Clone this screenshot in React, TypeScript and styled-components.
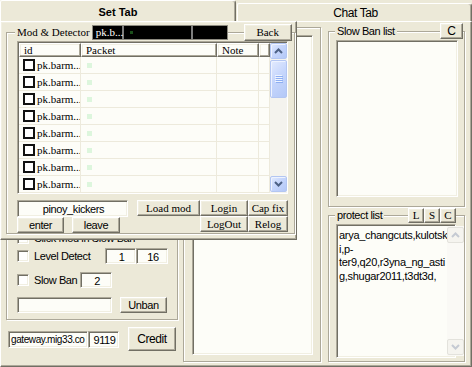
import React from 'react';
import styled, { createGlobalStyle, css } from 'styled-components';

const face = '#ECE9D8';
const light = '#F1EFE2';
const shadow = '#ACA899';
const dark = '#716F64';
const paper = '#FDFDF8';
const grid = '#EDEADC';

const sans = `"Liberation Sans", Arial, sans-serif`;
const serif = `"Liberation Serif", "Times New Roman", serif`;

// the old bitmap "MS Sans Serif" is much narrower than Arial: tighten it up
const narrow = css`
  font-family: ${sans};
  letter-spacing: -0.4px;
`;

const GlobalStyle = createGlobalStyle`
  html, body {
    margin: 0;
    padding: 0;
    background: ${face};
  }
  body {
    font-family: ${sans};
    font-size: 11px;
    color: #000;
  }
  * {
    box-sizing: border-box;
  }
`;

const raised = css`
  border: 1px solid;
  border-color: #fff ${dark} ${dark} #fff;
  box-shadow: inset -1px -1px 0 ${shadow}, inset 1px 1px 0 ${light};
`;

const sunken = css`
  border: 1px solid;
  border-color: ${shadow} #fff #fff ${shadow};
  box-shadow: inset 1px 1px 0 ${dark}, inset -1px -1px 0 ${light};
`;

const etched = css`
  border: 1px solid ${shadow};
  box-shadow: inset 1px 1px 0 #fff, 1px 1px 0 #fff;
`;

const Window = styled.div`
  width: 472px;
  height: 367px;
  overflow: hidden;
  background: ${face};
`;

const TabStrip = styled.div`
  display: flex;
  align-items: flex-end;
  height: 21px;
`;

const Tab = styled.div<{ $active?: boolean }>`
  display: flex;
  align-items: center;
  justify-content: center;
  background: ${face};
  border-top: 1px solid #fff;
  border-left: 1px solid #fff;
  border-right: 1px solid ${dark};
  border-radius: 2px 3px 0 0;
  box-shadow: inset -1px 0 0 ${shadow};
  ${(p) =>
    p.$active
      ? css`
          position: relative;
          z-index: 2;
          width: 236px;
          height: 22px;
          margin-bottom: -1px;
          font-family: ${sans};
          font-weight: bold;
          font-size: 11px;
        `
      : css`
          ${narrow};
          flex: 1;
          height: 18px;
          margin-left: 1px;
          font-size: 12px;
          padding: 1px 0 0 2px;
        `}
`;

const Body = styled.div`
  position: relative;
  height: 346px;
  display: grid;
  grid-template-columns: 172px 138px 141px;
  column-gap: 5px;
  padding: 0 4px 4px 5px;
  border: 1px solid;
  border-color: #fff ${dark} ${dark} #fff;
  box-shadow: inset -1px -1px 0 ${shadow};
`;

const Column = styled.div<{ $pad: string }>`
  display: flex;
  flex-direction: column;
  min-height: 0;
  padding: ${(p) => p.$pad};
`;

const GroupBox = styled.div<{ $pad: string; $h?: number; $end?: boolean }>`
  ${etched};
  display: flex;
  flex-direction: column;
  padding: ${(p) => p.$pad};
  justify-content: ${(p) => (p.$end ? 'flex-end' : 'flex-start')};
  ${(p) => (p.$h ? `height: ${p.$h}px; flex: none;` : 'flex: 1;')}
`;

const GroupHeader = styled.div<{ $h?: number; $inset?: string }>`
  display: flex;
  align-items: center;
  height: ${(p) => p.$h ?? 16}px;
  margin: ${(p) => p.$inset ?? '-9px 0 0 0'};
  flex: none;
`;

const Legend = styled.span<{ $serif?: boolean }>`
  ${(p) =>
    p.$serif
      ? css`
          font-family: ${serif};
          font-size: 11px;
        `
      : css`
          ${narrow};
          font-size: 11px;
        `}
  background: ${face};
  padding: 0 2px;
  line-height: 14px;
  white-space: nowrap;
`;

const Spacer = styled.div`
  flex: 1;
`;

const Button = styled.button<{ $w?: number; $h?: number; $serif?: boolean; $size?: number }>`
  ${raised};
  margin: 0;
  padding: 0;
  border-radius: 0;
  background: ${face};
  width: ${(p) => (p.$w ? `${p.$w}px` : 'auto')};
  height: ${(p) => (p.$h ? `${p.$h}px` : '100%')};
  flex: none;
  display: flex;
  align-items: center;
  justify-content: center;
  ${(p) =>
    p.$serif
      ? css`
          font-family: ${serif};
        `
      : narrow};
  font-size: ${(p) => p.$size ?? 11}px;
  line-height: 1;
  color: #000;
`;

const Field = styled.div<{ $w?: number; $h?: number; $left?: boolean; $size?: number }>`
  ${sunken};
  ${narrow};
  width: ${(p) => (p.$w ? `${p.$w}px` : 'auto')};
  height: ${(p) => p.$h ?? 16}px;
  flex: none;
  background: ${paper};
  display: flex;
  align-items: center;
  justify-content: ${(p) => (p.$left ? 'flex-start' : 'center')};
  padding: 1px 0 0 2px;
  font-size: ${(p) => p.$size ?? 11}px;
  white-space: nowrap;
  overflow: hidden;
`;

const CheckBox = styled.span`
  ${sunken};
  width: 12px;
  height: 12px;
  flex: none;
  background: #fff;
`;

const OptionRow = styled.div<{ $mt?: string }>`
  display: flex;
  align-items: center;
  height: 16px;
  flex: none;
  margin-top: ${(p) => p.$mt ?? '0'};
`;

const OptionLabel = styled.span<{ $w: number }>`
  ${narrow};
  width: ${(p) => p.$w}px;
  flex: none;
  padding-left: 5px;
  font-size: 11px;
  white-space: nowrap;
`;

const ServerRow = styled.div`
  display: flex;
  align-items: center;
  height: 24px;
  margin: 7px 0 11px 2px;
  flex: none;
`;

const Frame = styled.div`
  ${etched};
  flex: 1;
  display: flex;
  padding: 7px 7px 6px 8px;
  margin-top: 5px;
`;

const TextArea = styled.div<{ $mt?: number }>`
  ${sunken};
  flex: 1;
  display: flex;
  min-height: 0;
  margin-top: ${(p) => p.$mt ?? 0}px;
  background: ${paper};
  padding: 1px;
`;

const TextLines = styled.div`
  flex: 1;
  padding: 3px 0 0 1px;
  font-family: ${sans};
  font-size: 11px;
  letter-spacing: -0.3px;
  line-height: 13.5px;
  span {
    display: block;
    white-space: nowrap;
  }
`;

const ScrollTrack = styled.div<{ $off?: boolean; $mt?: number }>`
  width: 17px;
  flex: none;
  display: flex;
  flex-direction: column;
  padding: ${(p) => p.$mt ?? 0}px 0 1px 0;
  background: ${(p) => (p.$off ? '#FAF9F5' : '#F4F3EE')};
`;

const ScrollButton = styled.div<{ $off?: boolean; $h?: number; $mt?: string }>`
  height: ${(p) => p.$h ?? 16}px;
  margin-top: ${(p) => p.$mt ?? '0'};
  flex: none;
  display: flex;
  align-items: center;
  justify-content: center;
  border-radius: 2px;
  ${(p) =>
    p.$off
      ? css`
          border: 1px solid #E3E2DC;
          background: #F5F4EF;
        `
      : css`
          border: 1px solid #B3C6F2;
          background: linear-gradient(135deg, #E3EBFE 0%, #C6D6FC 45%, #B4C8F7 100%);
          box-shadow: inset 1px 1px 0 #EEF3FF;
        `}
`;

const Chevron: React.FC<{ up?: boolean; color: string }> = ({ up, color }) => (
  <svg width="9" height="6" viewBox="0 0 9 6">
    <path
      d={up ? 'M1 5 L4.5 1.5 L8 5' : 'M1 1 L4.5 4.5 L8 1'}
      fill="none"
      stroke={color}
      strokeWidth="2"
    />
  </svg>
);

const Grip = () => (
  <svg width="8" height="8" viewBox="0 0 8 8">
    {[0, 2, 4, 6].map((y) => (
      <rect key={`a${y}`} x="0" y={y} width="7" height="1" fill="#EEF4FF" />
    ))}
    {[1, 3, 5, 7].map((y) => (
      <rect key={`b${y}`} x="1" y={y} width="7" height="1" fill="#8DAEF2" />
    ))}
  </svg>
);

const ScrollBar: React.FC<{ off?: boolean; mt?: number }> = ({ off, mt }) => (
  <ScrollTrack $off={off} $mt={mt}>
    <ScrollButton $off={off}>
      <Chevron up color={off ? '#C5CAD3' : '#4D6185'} />
    </ScrollButton>
    {!off && (
      <ScrollButton $h={38} $mt="1px">
        <Grip />
      </ScrollButton>
    )}
    <Spacer />
    <ScrollButton $off={off}>
      <Chevron color={off ? '#C5CAD3' : '#4D6185'} />
    </ScrollButton>
  </ScrollTrack>
);

/* floating Mod & Detector window */

const ModPanel = styled.div`
  position: absolute;
  left: -1px;
  top: -1px;
  z-index: 3;
  width: 297px;
  height: 219px;
  display: flex;
  flex-direction: column;
  background: ${face};
  ${raised};
`;

const ModGroup = styled.div`
  ${etched};
  flex: 1;
  display: flex;
  flex-direction: column;
  margin: 10px 1px 5px 5px;
  padding: 0 6px 0 10px;
`;

const StatusBar = styled.div`
  width: 136px;
  height: 15px;
  flex: none;
  display: flex;
  background: #000;
  border: 1px solid #8C8A80;
`;

const StatusPane = styled.div<{ $w?: number }>`
  ${(p) => (p.$w ? `width: ${p.$w}px; flex: none;` : 'flex: 1;')}
  display: flex;
  align-items: center;
  padding-left: 3px;
  border-right: 2px solid #7E7E7E;
  color: #fff;
  font-family: ${serif};
  font-size: 11px;
  &:last-child {
    border-right: none;
  }
`;

const Led = styled.span`
  width: 3px;
  height: 3px;
  margin-left: 3px;
  background: #1B4F1B;
`;

const ListView = styled.div`
  height: 153px;
  flex: none;
  display: flex;
  background: ${paper};
  border: 1px solid;
  border-color: ${shadow} #fff #fff ${shadow};
  box-shadow: inset 1px 1px 0 ${dark};
  padding: 1px 0 0 1px;
`;

const ListBody = styled.div`
  flex: 1;
  display: flex;
  flex-direction: column;
`;

const columns = '62px 136px 42px 1fr';

const HeaderRow = styled.div`
  display: grid;
  grid-template-columns: ${columns};
  height: 14px;
  flex: none;
`;

const HeaderCell = styled.div`
  ${raised};
  padding-left: 4px;
  font-family: ${serif};
  font-size: 11px;
  line-height: 12px;
`;

const ListRow = styled.div`
  display: grid;
  grid-template-columns: ${columns};
  height: 17px;
  flex: none;
  border-bottom: 1px solid ${grid};
`;

const ListCell = styled.div`
  display: flex;
  align-items: center;
  border-right: 1px solid ${grid};
  font-family: ${serif};
  font-size: 11px;
  white-space: nowrap;
  overflow: hidden;
`;

const FlatCheck = styled.span`
  width: 12px;
  height: 12px;
  flex: none;
  margin: 0 2px 0 4px;
  border: 2px solid #111;
  background: #fff;
`;

const PacketMark = styled.span`
  width: 5px;
  height: 5px;
  margin-left: 6px;
  background: #DDF6DD;
`;

const BottomArea = styled.div`
  display: flex;
  height: 33px;
  margin-top: 6px;
  flex: none;
`;

const NickBlock = styled.div`
  width: 111px;
  display: flex;
  flex-direction: column;
`;

const NickButtons = styled.div`
  display: flex;
  gap: 8px;
`;

const CommandGrid = styled.div`
  margin-left: 9px;
  display: grid;
  grid-template-columns: 63px 48px 40px;
  grid-template-rows: 16px 16px;
  align-self: flex-start;
`;

const packets = Array.from({ length: 8 }, (_, i) => ({ id: i, name: 'pk.barm...' }));

const App: React.FC = () => {
  return (
    <Window>
      <GlobalStyle />
      <TabStrip>
        <Tab $active>Set Tab</Tab>
        <Tab>Chat Tab</Tab>
      </TabStrip>
      <Body>
        <Column $pad="6px 0 0 0">
          <GroupBox $pad="0 0 6px 10px" $end>
            <OptionRow>
              <CheckBox />
              <OptionLabel $w={140}>Click Mod in Slow Ban</OptionLabel>
            </OptionRow>
            <OptionRow $mt="2px">
              <CheckBox />
              <OptionLabel $w={76}>Level Detect</OptionLabel>
              <Field $w={31}>1</Field>
              <Field $w={32}>16</Field>
            </OptionRow>
            <OptionRow $mt="8px">
              <CheckBox />
              <OptionLabel $w={51}>Slow Ban</OptionLabel>
              <Field $w={32}>2</Field>
            </OptionRow>
            <OptionRow $mt="9px">
              <Field $w={95} />
              <Button $w={47} $h={16} style={{ marginLeft: 8 }}>
                Unban
              </Button>
            </OptionRow>
          </GroupBox>
          <ServerRow>
            <Field $w={80} $h={17} $left $size={10}>
              gateway.mig33.co
            </Field>
            <Field $w={31} $h={17}>
              9119
            </Field>
            <Button $w={48} $h={24} $size={12} style={{ marginLeft: 9 }}>
              Credit
            </Button>
          </ServerRow>
        </Column>

        <Column $pad="0">
          <Frame>
            <TextArea />
          </Frame>
        </Column>

        <Column $pad="9px 2px 0 2px">
          <GroupBox $pad="0 0 9px 6px" $h={176}>
            <GroupHeader $inset="-9px 1px 0 0">
              <Legend>Slow Ban list</Legend>
              <Spacer />
              <Button $w={23} $h={16} $size={12}>
                C
              </Button>
            </GroupHeader>
            <TextArea $mt={1} style={{ marginLeft: 1, marginRight: 6 }} />
          </GroupBox>
          <GroupBox $pad="0 8px 3px 6px" style={{ marginTop: 8 }}>
            <GroupHeader>
              <Legend>protect list</Legend>
              <Spacer />
              <Button $w={16} $h={15} $serif>
                L
              </Button>
              <Button $w={16} $h={15} $serif>
                S
              </Button>
              <Button $w={16} $h={15} $serif>
                C
              </Button>
            </GroupHeader>
            <TextArea $mt={1} style={{ marginLeft: 1 }}>
              <TextLines>
                <span>arya_changcuts,kulotsk</span>
                <span>i,p-</span>
                <span>ter9,q20,r3yna_ng_asti</span>
                <span>g,shugar2011,t3dt3d,</span>
              </TextLines>
              <ScrollBar off mt={1} />
            </TextArea>
          </GroupBox>
        </Column>

        <ModPanel>
          <ModGroup>
            <GroupHeader $h={18} $inset="-10px 0 0 -2px">
              <Legend $serif>Mod &amp; Detector</Legend>
              <Spacer />
              <StatusBar>
                <StatusPane $w={31}>pk.b...</StatusPane>
                <StatusPane $w={69}>
                  <Led />
                </StatusPane>
                <StatusPane />
              </StatusBar>
              <Button $w={48} $h={17} $serif style={{ marginLeft: 16 }}>
                Back
              </Button>
            </GroupHeader>
            <ListView>
              <ListBody>
                <HeaderRow>
                  <HeaderCell>id</HeaderCell>
                  <HeaderCell>Packet</HeaderCell>
                  <HeaderCell>Note</HeaderCell>
                  <HeaderCell />
                </HeaderRow>
                {packets.map((p) => (
                  <ListRow key={p.id}>
                    <ListCell>
                      <FlatCheck />
                      {p.name}
                    </ListCell>
                    <ListCell>
                      <PacketMark />
                    </ListCell>
                    <ListCell />
                    <ListCell />
                  </ListRow>
                ))}
              </ListBody>
              <ScrollBar />
            </ListView>
            <BottomArea>
              <NickBlock>
                <Field $h={17}>pinoy_kickers</Field>
                <NickButtons>
                  <Button $w={47} $h={16}>
                    enter
                  </Button>
                  <Button $w={48} $h={16}>
                    leave
                  </Button>
                </NickButtons>
              </NickBlock>
              <CommandGrid>
                <Button $serif>Load mod</Button>
                <Button $serif>Login</Button>
                <Button $serif>Cap fix</Button>
                <span />
                <Button $serif>LogOut</Button>
                <Button $serif>Relog</Button>
              </CommandGrid>
            </BottomArea>
          </ModGroup>
        </ModPanel>
      </Body>
    </Window>
  );
};

export default App;
